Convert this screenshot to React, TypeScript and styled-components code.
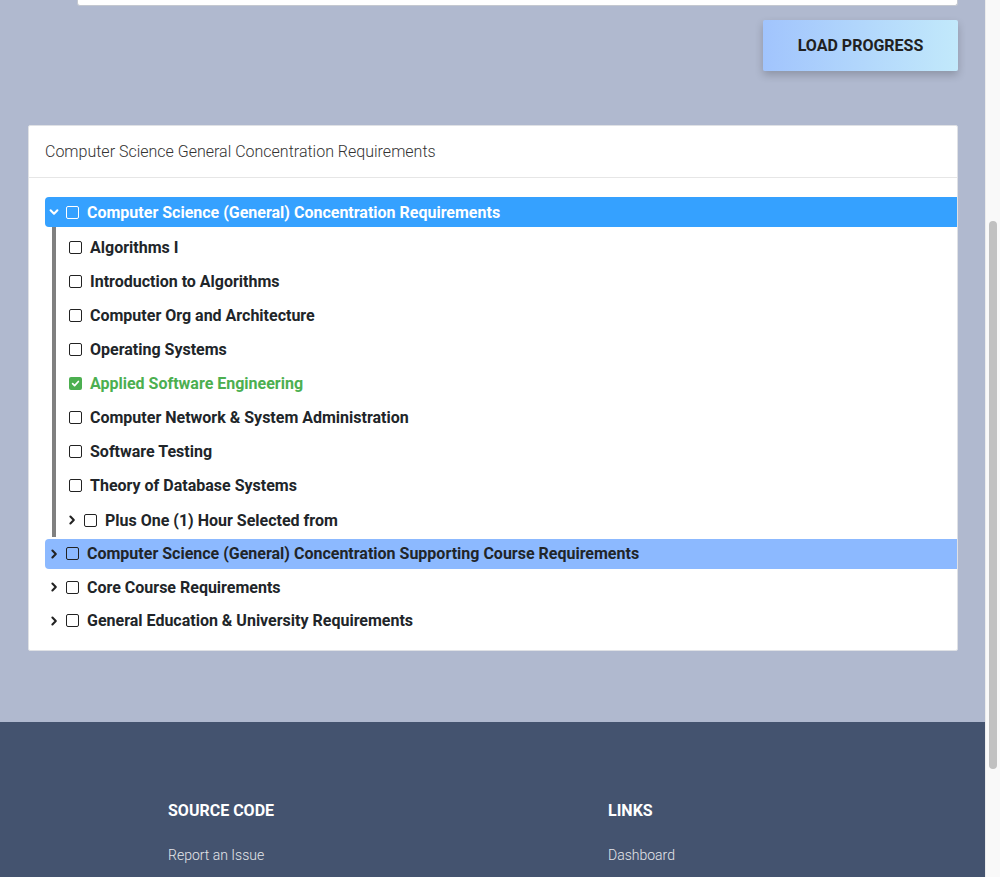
import React from "react";
import styled, { createGlobalStyle } from "styled-components";

const GlobalStyle = createGlobalStyle`
    html, body {
        overflow: hidden;
    }
    body {
        margin: 0;
        padding-right: 15px;
        background-color: #b0b9cf;
        font-family: Roboto, "Liberation Sans", Arial, sans-serif;
        color: #212529;
    }
    * {
        box-sizing: border-box;
    }
`;

const Main = styled.main`
    padding: 0 27px 0 28px;
`;

// bottom edge of the progress textarea, page is scrolled past the rest of it
const InputEdge = styled.div`
    height: 6px;
    margin-left: 49px;
    background: white;
    border: 1px solid #c4c8d0;
    border-top: none;
    border-radius: 0 0 3px 3px;
`;

const ButtonRow = styled.div`
    display: flex;
    justify-content: flex-end;
    margin-top: 14px;
`;

const LoadButton = styled.button`
    width: 195px;
    height: 51px;
    border: none;
    border-radius: 2px;
    background: linear-gradient(to right, #a1c4fd, #c2e9fb);
    box-shadow: 0 4px 8px rgba(0, 0, 0, 0.2);
    font-family: inherit;
    font-size: 16px;
    font-weight: 700;
    color: #212121;
    text-transform: uppercase;
    cursor: pointer;
`;

const Card = styled.section`
    margin-top: 54px;
    background: white;
    border: 1px solid #dfe1e5;
    border-radius: 2px;
`;

const CardHeader = styled.div`
    height: 52px;
    display: flex;
    align-items: center;
    padding: 0 16px;
    border-bottom: 1px solid #e6e6e6;
    font-size: 16px;
    font-weight: 300;
    color: #333;
`;

const CardBody = styled.div`
    padding: 19px 0 14px 16px;
`;

const TreeList = styled.ul`
    list-style: none;
    margin: 0;
    padding: 0;
`;

const ChildList = styled.ul`
    list-style: none;
    margin: 0 0 0 7px;
    padding: 3px 0 0 13px;
    border-left: 4px solid #808080;
`;

const TreeItem = styled.li<{ $gap?: number }>`
    margin-top: ${(p) => p.$gap ?? 0}px;
`;

const Row = styled.div<{ $tone?: "active" | "soft"; $nested?: boolean }>`
    display: flex;
    align-items: center;
    height: ${(p) => (p.$nested ? "34.125px" : "30px")};
    padding-left: ${(p) => (p.$nested ? "0" : "4px")};
    border-radius: 4px 0 0 4px;
    background-color: ${(p) =>
        p.$tone === "active" ? "#35a1ff" : p.$tone === "soft" ? "#8cb9ff" : "transparent"};
    color: ${(p) => (p.$tone === "active" ? "white" : "#212529")};
`;

const Toggle = styled.span<{ $tight?: boolean }>`
    display: inline-flex;
    width: 10px;
    height: 10px;
    margin-left: ${(p) => (p.$tight ? "-2px" : "0")};
    margin-right: 7px;
`;

const Box = styled.span<{ $checked?: boolean; $light?: boolean }>`
    display: inline-flex;
    align-items: center;
    justify-content: center;
    flex: none;
    width: 13px;
    height: 13px;
    margin-right: 8px;
    border-radius: 2px;
    border: ${(p) => (p.$checked ? "none" : `1.5px solid ${p.$light ? "white" : "#222"}`)};
    background: ${(p) => (p.$checked ? "#4caf50" : "transparent")};
`;

const Label = styled.span<{ $done?: boolean }>`
    font-size: 16px;
    font-weight: 700;
    white-space: nowrap;
    color: ${(p) => (p.$done ? "#4caf50" : "inherit")};
`;

const Footer = styled.footer`
    margin-top: 71px;
    height: 155px;
    background-color: #44536f;
    color: white;
    padding: 77px 0 0 168px;
    display: grid;
    grid-template-columns: 440px 1fr;
    align-content: start;
`;

const FooterHeading = styled.h4`
    margin: 0;
    height: 24px;
    line-height: 24px;
    font-size: 16px;
    font-weight: 700;
    text-transform: uppercase;
`;

const FooterLinks = styled.ul`
    list-style: none;
    margin: 22px 0 0;
    padding: 0;
`;

const FooterLink = styled.a`
    display: block;
    line-height: 20px;
    font-size: 14px;
    font-weight: 300;
    color: #e4e6ea;
    text-decoration: none;
`;

const ScrollTrack = styled.div`
    position: fixed;
    top: 0;
    right: 0;
    width: 15px;
    height: 100vh;
    background: #f9f9f9;
    border-left: 1px solid #ececec;
`;

const ScrollThumb = styled.div`
    position: absolute;
    top: 221px;
    left: 3px;
    width: 8px;
    height: 548px;
    border-radius: 4px;
    background: #c1c1c1;
`;

function Chevron({ open, color }: { open?: boolean; color: string }) {
    return (
        <svg width="10" height="10" viewBox="0 0 10 10" fill="none">
            <path
                d={open ? "M1.6 3.3 L5 6.7 L8.4 3.3" : "M3.4 1.6 L6.8 5 L3.4 8.4"}
                stroke={color}
                strokeWidth="2.1"
                strokeLinecap="round"
                strokeLinejoin="round"
            />
        </svg>
    );
}

function Check({ checked, light }: { checked?: boolean; light?: boolean }) {
    return (
        <Box $checked={checked} $light={light}>
            {checked && (
                <svg width="9" height="9" viewBox="0 0 10 10" fill="none">
                    <path d="M1.8 5.2 L4 7.3 L8.2 2.8" stroke="white" strokeWidth="1.9" strokeLinecap="round" strokeLinejoin="round" />
                </svg>
            )}
        </Box>
    );
}

type Course = { name: string; done?: boolean; group?: boolean };

const concentration: Course[] = [
    { name: "Algorithms I" },
    { name: "Introduction to Algorithms" },
    { name: "Computer Org and Architecture" },
    { name: "Operating Systems" },
    { name: "Applied Software Engineering", done: true },
    { name: "Computer Network & System Administration" },
    { name: "Software Testing" },
    { name: "Theory of Database Systems" },
    { name: "Plus One (1) Hour Selected from", group: true },
];

const collapsed: { name: string; tone?: "soft"; gap: number }[] = [
    { name: "Computer Science (General) Concentration Supporting Course Requirements", tone: "soft", gap: 1.5 },
    { name: "Core Course Requirements", gap: 3.5 },
    { name: "General Education & University Requirements", gap: 3.5 },
];

export default function App() {
    return (
        <>
            <GlobalStyle />
            <Main>
                <InputEdge />
                <ButtonRow>
                    <LoadButton>Load Progress</LoadButton>
                </ButtonRow>
                <Card>
                    <CardHeader>Computer Science General Concentration Requirements</CardHeader>
                    <CardBody>
                        <TreeList>
                            <TreeItem>
                                <Row $tone="active">
                                    <Toggle><Chevron open color="white" /></Toggle>
                                    <Check light />
                                    <Label>Computer Science (General) Concentration Requirements</Label>
                                </Row>
                                <ChildList>
                                    {concentration.map((c) => (
                                        <TreeItem key={c.name}>
                                            <Row $nested>
                                                {c.group && <Toggle $tight><Chevron color="#222" /></Toggle>}
                                                <Check checked={c.done} />
                                                <Label $done={c.done}>{c.name}</Label>
                                            </Row>
                                        </TreeItem>
                                    ))}
                                </ChildList>
                            </TreeItem>
                            {collapsed.map((n) => (
                                <TreeItem $gap={n.gap} key={n.name}>
                                    <Row $tone={n.tone}>
                                        <Toggle><Chevron color="#222" /></Toggle>
                                        <Check />
                                        <Label>{n.name}</Label>
                                    </Row>
                                </TreeItem>
                            ))}
                        </TreeList>
                    </CardBody>
                </Card>
            </Main>
            <Footer>
                <div>
                    <FooterHeading>Source Code</FooterHeading>
                    <FooterLinks>
                        <li><FooterLink href="#">Report an Issue</FooterLink></li>
                    </FooterLinks>
                </div>
                <div>
                    <FooterHeading>Links</FooterHeading>
                    <FooterLinks>
                        <li><FooterLink href="#">Dashboard</FooterLink></li>
                    </FooterLinks>
                </div>
            </Footer>
            <ScrollTrack>
                <ScrollThumb />
            </ScrollTrack>
        </>
    );
}
